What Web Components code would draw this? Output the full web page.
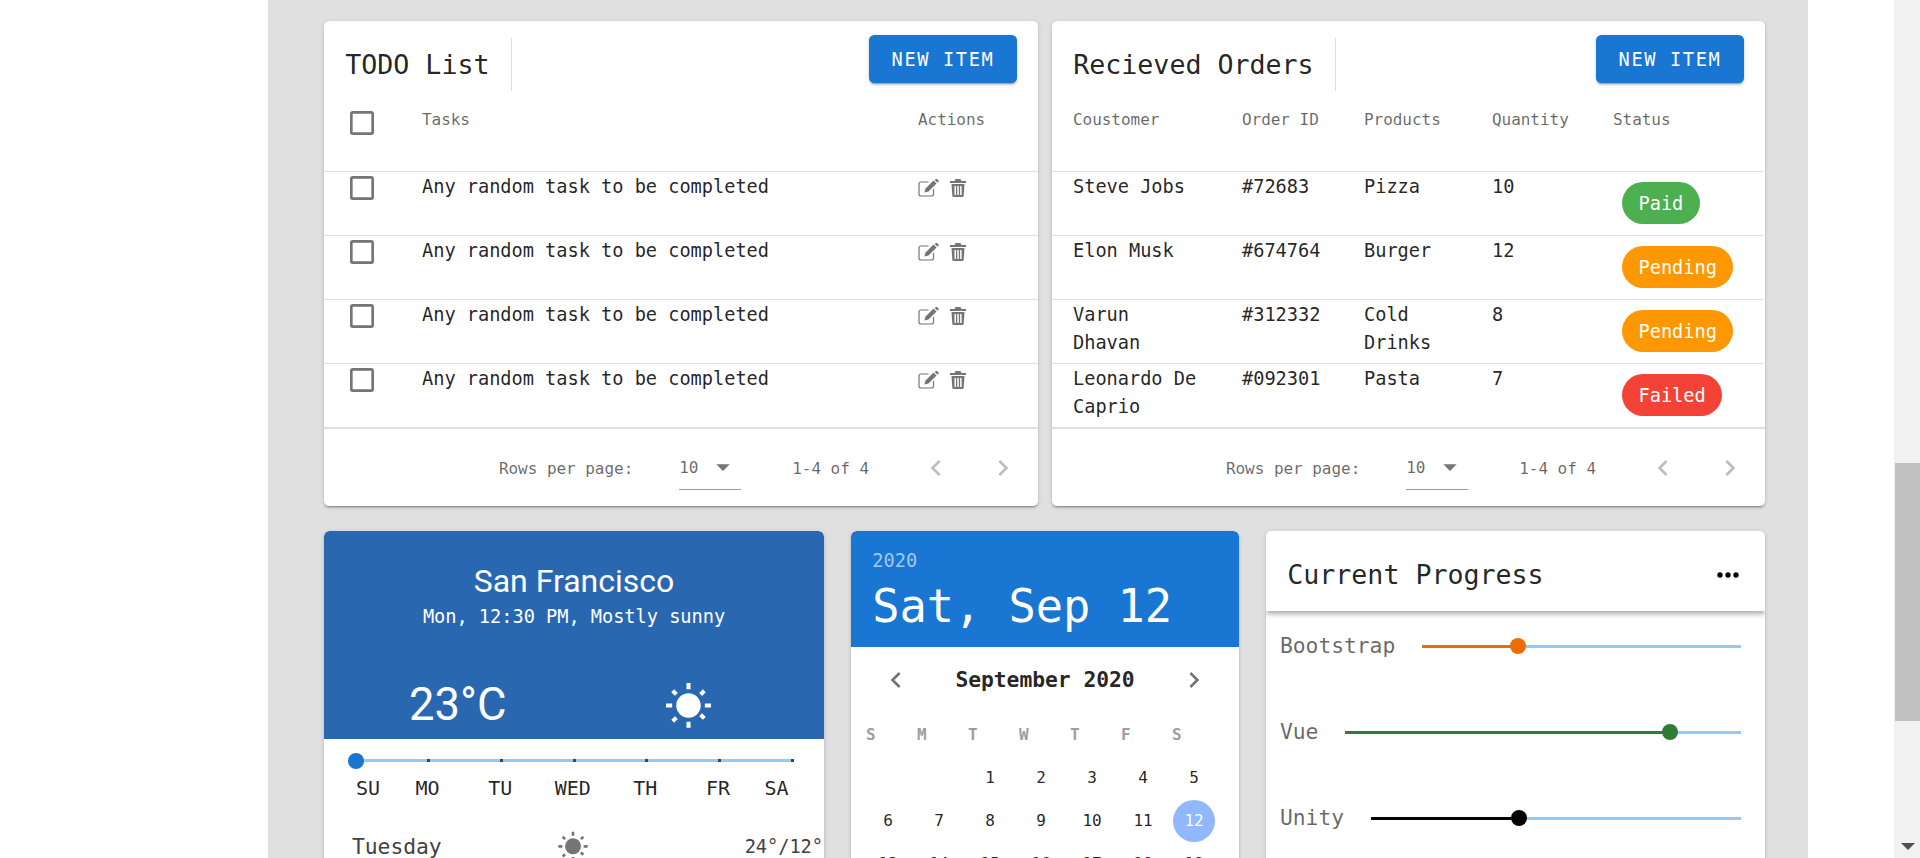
<!DOCTYPE html>
<html>
<head>
<meta charset="utf-8">
<title>Dashboard</title>
<style>
html,body{ margin:0; height:858px; overflow:hidden; background:#fff; font-family:"DejaVu Sans Mono",monospace; }
</style>
</head>
<body>
<x-page>
  <x-table-card title="TODO List" cols="98px 1fr 120px" style="--w:714px">
    <x-row head><x-check></x-check><span>Tasks</span><span>Actions</span></x-row>
    <x-row><x-check></x-check><span>Any random task to be completed</span><x-actions></x-actions></x-row>
    <x-row><x-check></x-check><span>Any random task to be completed</span><x-actions></x-actions></x-row>
    <x-row><x-check></x-check><span>Any random task to be completed</span><x-actions></x-actions></x-row>
    <x-row last><x-check></x-check><span>Any random task to be completed</span><x-actions></x-actions></x-row>
  </x-table-card>
  <x-table-card title="Recieved Orders" cols="169px 122px 128px 121px 1fr" pad style="--w:713px">
    <x-row head><span>Coustomer</span><span>Order ID</span><span>Products</span><span>Quantity</span><span>Status</span></x-row>
    <x-row><span>Steve Jobs</span><span>#72683</span><span>Pizza</span><span>10</span><x-chip color="#4caf50">Paid</x-chip></x-row>
    <x-row><span>Elon Musk</span><span>#674764</span><span>Burger</span><span>12</span><x-chip color="#ff9800">Pending</x-chip></x-row>
    <x-row><span>Varun Dhavan</span><span>#312332</span><span>Cold Drinks</span><span>8</span><x-chip color="#ff9800">Pending</x-chip></x-row>
    <x-row last><span>Leonardo De Caprio</span><span>#092301</span><span>Pasta</span><span>7</span><x-chip color="#f44336">Failed</x-chip></x-row>
  </x-table-card>
  <x-weather slot="low"></x-weather>
  <x-calendar slot="low"></x-calendar>
  <x-progress slot="low">
    <x-progress-row label="Bootstrap" value="30" color="#ef6c00"></x-progress-row>
    <x-progress-row label="Vue" value="82" color="#2e7d32"></x-progress-row>
    <x-progress-row label="Unity" value="40" color="#000"></x-progress-row>
  </x-progress>
</x-page>

<script>
const MONO = `"DejaVu Sans Mono",monospace`;
const SUN = "M3.55,18.54L4.96,19.95L6.75,18.17L5.34,16.76M11,22.45C11.32,22.45 13,22.45 13,22.45V19.5H11M12,5.5A6,6 0 0,0 6,11.5A6,6 0 0,0 12,17.5A6,6 0 0,0 18,11.5C18,8.18 15.31,5.5 12,5.5M20,12.5H23V10.5H20M17.24,16.76L19.03,18.55L20.44,17.14L18.65,15.35M20.45,5L19.04,3.6L17.25,5.39L18.66,6.8M13,0.55H11V3.5H13M4,10.5H1V12.5H4M6.76,5.39L4.97,3.61L3.56,5L5.34,6.79L6.76,5.39Z";
const LEFT = "M15.41,16.58L10.83,12L15.41,7.41L14,6L8,12L14,18L15.41,16.58Z";
const RIGHT = "M8.59,16.58L13.17,12L8.59,7.41L10,6L16,12L10,18L8.59,16.58Z";
const icon = (d, size, fill) => `<svg width="${size}" height="${size}" viewBox="0 0 24 24" fill="${fill}" style="display:block"><path d="${d}"/></svg>`;
const CARD = `border-radius:5.33px; background:#fff; box-shadow:0 3px 1px -2px rgba(0,0,0,.2),0 2px 2px 0 rgba(0,0,0,.14),0 1px 5px 0 rgba(0,0,0,.12);`;

// small helper, every element is just a template + shadow root
function define(name, html, extra = {}){
  const tpl = document.createElement("template");
  tpl.innerHTML = html;
  customElements.define(name, class extends HTMLElement{
    constructor(){
      super();
      this.attachShadow({mode:"open"}).appendChild(tpl.content.cloneNode(true));
    }
    connectedCallback(){ if(extra.init) extra.init.call(this, this.shadowRoot); }
  });
}

define("x-page", `
<style>
:host{ display:flex; height:858px; overflow:hidden; background:#fff; letter-spacing:-.04px }
.side{ width:268px; flex:none }
.main{ width:1540px; flex:none; box-sizing:border-box; background:#e0e0e0; padding:21px 43px 0 56px; overflow:hidden }
.top{ display:flex; gap:14px }
.low{ display:flex; gap:27px; margin-top:25px }
.gut{ width:86px; flex:none }
.bar{ width:26px; flex:none; background:#f1f1f1; display:flex; flex-direction:column; align-items:center }
.thumb{ margin-top:463px; height:258px; width:100%; margin-left:2px; background:#c1c1c1 }
.arrow{ margin-top:auto; margin-bottom:8px; margin-left:2px; width:0; height:0; border-left:7px solid transparent; border-right:7px solid transparent; border-top:7px solid #505050 }
</style>
<div class="side"></div>
<div class="main">
  <div class="top"><slot></slot></div>
  <div class="low"><slot name="low"></slot></div>
</div>
<div class="gut"></div>
<div class="bar"><div class="thumb"></div><div class="arrow"></div></div>
`);

define("x-table-card", `
<style>
:host{ display:block; width:var(--w); height:485px; flex:none; ${CARD} overflow:hidden; color:rgba(0,0,0,.87) }
.top{ display:flex; height:84px; box-sizing:border-box; padding:17px 21px 0 21.33px }
h2{ margin:0; font:400 26.67px/53px ${MONO}; padding-right:21.33px; border-right:1px solid #dcdcdc; height:53px }
button{ margin:-3px 0 0 auto; width:148px; height:48px; border:0; border-radius:5.33px; background:#1976d2; color:#fff;
  font:400 18.67px ${MONO}; letter-spacing:1.63px; padding:0;
  box-shadow:0 3px 1px -2px rgba(0,0,0,.2),0 2px 2px 0 rgba(0,0,0,.14),0 1px 5px 0 rgba(0,0,0,.12) }
.foot{ display:flex; align-items:center; height:78px; padding-right:11px; font:400 16px ${MONO}; color:rgba(0,0,0,.6); box-sizing:border-box }
.rows{ margin-left:auto }
.sel{ margin-left:46px; width:62px; height:44px; box-sizing:border-box; border-bottom:1px solid #9e9e9e; display:flex; align-items:center; margin-bottom:1px }
.sel svg{ margin-left:9px }
.range{ margin:0 43px 0 51px }
.nav{ display:flex; gap:19px }
.nav span{ width:48px; display:flex; justify-content:center }
</style>
<div class="top"><h2></h2><button>NEW ITEM</button></div>
<slot></slot>
<div class="foot">
  <span class="rows">Rows per page:</span>
  <div class="sel"><span>10</span>${icon("M7,10L12,15L17,10H7Z",32,"#757575")}</div>
  <span class="range">1-4 of 4</span>
  <div class="nav"><span>${icon(LEFT,32,"#bdbdbd")}</span><span>${icon(RIGHT,32,"#bdbdbd")}</span></div>
</div>
`, { init(root){
  root.querySelector("h2").textContent = this.getAttribute("title");
  this.removeAttribute("title");
  this.style.setProperty("--cols", this.getAttribute("cols"));
  if(this.hasAttribute("pad")) this.style.setProperty("--pad", "21px");
}});

define("x-row", `
<style>
:host{ display:grid; grid-template-columns:var(--cols); height:64px; box-sizing:border-box; border-bottom:1px solid #e0e0e0; font:400 18.67px/28px ${MONO}; align-items:start }
:host([head]){ height:67px; font-size:16px; color:rgba(0,0,0,.6) }
:host([last]){ height:65px; border-bottom:2px solid #e0e0e0 }
::slotted(span){ padding:1px var(--pad,0px) 0 }
</style>
<slot></slot>
`);

define("x-check", `
<style>
:host{ display:block; margin:0 0 0 22px; width:32px; height:32px }
:host-context(x-row[head]){ margin-top:2px }
</style>
${icon("M19,3H5C3.89,3 3,3.89 3,5V19A2,2 0 0,0 5,21H19A2,2 0 0,0 21,19V5C21,3.89 20.1,3 19,3M19,5V19H5V5H19Z",32,"#757575")}
`);

define("x-actions", `
<style>:host{ display:flex; gap:11px; margin-top:7px } svg{ display:block }</style>
<svg width="21" height="18" viewBox="0 0 21 18" fill="none">
  <path d="M10.5 3H3a2 2 0 0 0-2 2v10a2 2 0 0 0 2 2h10.500a2 2 0 0 0 2-2v-5" stroke="#757575" stroke-width="1.2"/>
  <path d="M6.500 13.500l1-4L15.500 1.500l3 3-8 8z" fill="#757575"/>
  <path d="M16.500.7l3 3 1-1.200a1 1 0 0 0 0-1.300l-1.300-1a1 1 0 0 0-1.400 0z" fill="#757575"/>
</svg>
<svg width="16" height="18" viewBox="0 0 16 18" fill="#757575">
  <path d="M5.500 0h5l1 2H16v2H0V2h4.500z"/>
  <path d="M1.500 5h13l-.8 11.500a1.500 1.500 0 0 1-1.500 1.500H3.800a1.500 1.500 0 0 1-1.500-1.500zM4.500 7v9h1.500V7zm2.800 0v9h1.500V7zm2.800 0v9h1.500V7z" fill-rule="evenodd"/>
</svg>
`);

define("x-chip", `
<style>
:host{ display:inline-flex; justify-self:start; align-items:center; height:42px; border-radius:21px; padding:0 16.5px; margin:10px 0 0 30px;
  color:#fff; font:400 18.67px ${MONO}; background:var(--c) }
</style>
<slot></slot>
`, { init(){ this.style.setProperty("--c", this.getAttribute("color")); }});

define("x-weather", `
<style>
:host{ display:block; width:500px; height:340px; flex:none; ${CARD} overflow:hidden; color:rgba(0,0,0,.87) }
.head{ height:208px; box-sizing:border-box; background:#2a67b1; color:#fff; padding-top:30px; text-align:center; display:flex; flex-direction:column; border-radius:5.33px 5.33px 0 0 }
.city{ font:400 32px/40px Roboto,sans-serif; letter-spacing:0 }
.sub{ font:400 18.67px/28px ${MONO}; margin-top:2px }
.now{ display:flex; align-items:center; margin-top:auto; height:68px; padding-left:85px }
.temp{ font:400 45.33px/68px Roboto,sans-serif; letter-spacing:0 }
.now svg{ margin:3px 0 0 158px }
.track{ position:relative; margin:20px 32px 0 32px; height:3px; background:#90caf9 }
.tick{ position:absolute; top:0; width:3px; height:3px; margin-left:-1.500px; background:#37474f }
.thumb{ position:absolute; left:-8px; top:-6.500px; width:16px; height:16px; border-radius:50%; background:#1976d2 }
.labels{ display:grid; grid-template-columns:36.300px repeat(5,72.600px) 34.300px; margin:14px 33px 0 31px; font:400 20px/24px ${MONO} }
.labels span{ justify-self:center; white-space:nowrap }
.labels span:first-child{ justify-self:start; margin-left:1px }
.labels span:last-child{ justify-self:end }
.day{ display:grid; grid-template-columns:205px 32px 1fr; align-items:center; margin-top:31px; padding:0 1px 0 28px; color:#424242 }
.day b{ font:400 21.33px/32px ${MONO} }
.day i{ font:400 18.67px/32px ${MONO}; justify-self:end }
</style>
<div class="head">
  <div class="city">San Francisco</div>
  <div class="sub">Mon, 12:30 PM, Mostly sunny</div>
  <div class="now"><span class="temp">23°C</span>${icon(SUN,49,"#fff")}</div>
</div>
<div class="track">
  <div class="tick" style="left:16.67%"></div><div class="tick" style="left:33.33%"></div><div class="tick" style="left:50%"></div>
  <div class="tick" style="left:66.67%"></div><div class="tick" style="left:83.33%"></div><div class="tick" style="left:100%"></div>
  <div class="thumb"></div>
</div>
<div class="labels"><span>SU</span><span>MO</span><span>TU</span><span>WED</span><span>TH</span><span>FR</span><span>SA</span></div>
<div class="day"><b>Tuesday</b>${icon(SUN,32,"#757575")}<i>24°/12°</i></div>
`);

define("x-calendar", `
<style>
:host{ display:block; width:388px; height:340px; flex:none; ${CARD} overflow:hidden; color:rgba(0,0,0,.87) }
.head{ height:116px; box-sizing:border-box; background:#1976d2; color:#fff; padding:16px 21px 0 21.33px; border-radius:5.33px 5.33px 0 0 }
.year{ font:400 18.67px/28px ${MONO}; color:rgba(255,255,255,.6) }
.date{ font:400 45.33px/60px ${MONO}; margin-top:2px }
.nav{ display:flex; align-items:center; justify-content:space-between; height:32px; margin-top:17px; padding:0 29px }
.nav b{ font:700 21.33px/32px ${MONO} }
.week{ display:grid; grid-template-columns:repeat(7,51px); margin-top:29px; padding-left:15px; font:700 16px/20px ${MONO}; color:#9e9e9e }
.days{ display:grid; grid-template-columns:repeat(7,51px); grid-auto-rows:43px; margin-top:11px; margin-left:11.500px; font:400 16px/43px ${MONO}; text-align:center }
.on{ position:relative; color:#fff; z-index:0 }
.on::before{ content:""; position:absolute; z-index:-1; left:4.500px; top:.5px; width:42px; height:42px; border-radius:50%; background:#90b8fb }
</style>
<div class="head"><div class="year">2020</div><div class="date">Sat, Sep 12</div></div>
<div class="nav">${icon(LEFT,32,"#757575")}<b>September 2020</b>${icon(RIGHT,32,"#757575")}</div>
<div class="week"><span>S</span><span>M</span><span>T</span><span>W</span><span>T</span><span>F</span><span>S</span></div>
<div class="days"></div>
`, { init(root){
  const days = root.querySelector(".days");
  let html = "<span></span><span></span>";
  for(let d = 1; d <= 19; d++) html += `<span${d === 12 ? ' class="on"' : ''}>${d}</span>`;
  days.innerHTML = html;
}});

define("x-progress", `
<style>
:host{ display:block; width:499px; height:340px; flex:none; ${CARD} overflow:hidden }
.top{ display:flex; align-items:center; height:80px; box-sizing:border-box; padding:8px 21px 0 21.33px; border-radius:5.33px 5.33px 0 0; background:#fff; color:rgba(0,0,0,.87);
  box-shadow:0 2px 4px -1px rgba(0,0,0,.2),0 4px 5px 0 rgba(0,0,0,.14),0 1px 10px 0 rgba(0,0,0,.12) }
h2{ margin:0 auto 0 0; font:400 26.67px/40px ${MONO} }
.list{ padding:19px 24px 0 14px }
</style>
<div class="top"><h2>Current Progress</h2>${icon("M16,12A2,2 0 0,1 18,10A2,2 0 0,1 20,12A2,2 0 0,1 18,14A2,2 0 0,1 16,12M10,12A2,2 0 0,1 12,10A2,2 0 0,1 14,12A2,2 0 0,1 12,14A2,2 0 0,1 10,12M4,12A2,2 0 0,1 6,10A2,2 0 0,1 8,12A2,2 0 0,1 6,14A2,2 0 0,1 4,12Z",32,"#000")}</div>
<div class="list"><slot></slot></div>
`);

define("x-progress-row", `
<style>
:host{ display:flex; align-items:center; height:32px; margin-bottom:54px; font:400 21.33px/32px ${MONO}; color:rgba(0,0,0,.6) }
.bar{ position:relative; flex:1; height:3px; margin-left:26.670px; background:#90caf9 }
.fill{ height:100%; background:var(--c) }
.thumb{ position:absolute; top:-6.500px; width:16px; height:16px; margin-left:-8px; border-radius:50%; background:var(--c) }
</style>
<span class="label"></span>
<div class="bar"><div class="fill"></div><div class="thumb"></div></div>
`, { init(root){
  const v = this.getAttribute("value") + "%";
  root.querySelector(".label").textContent = this.getAttribute("label");
  root.querySelector(".fill").style.width = v;
  root.querySelector(".thumb").style.left = v;
  this.style.setProperty("--c", this.getAttribute("color"));
}});
</script>
</body>
</html>
